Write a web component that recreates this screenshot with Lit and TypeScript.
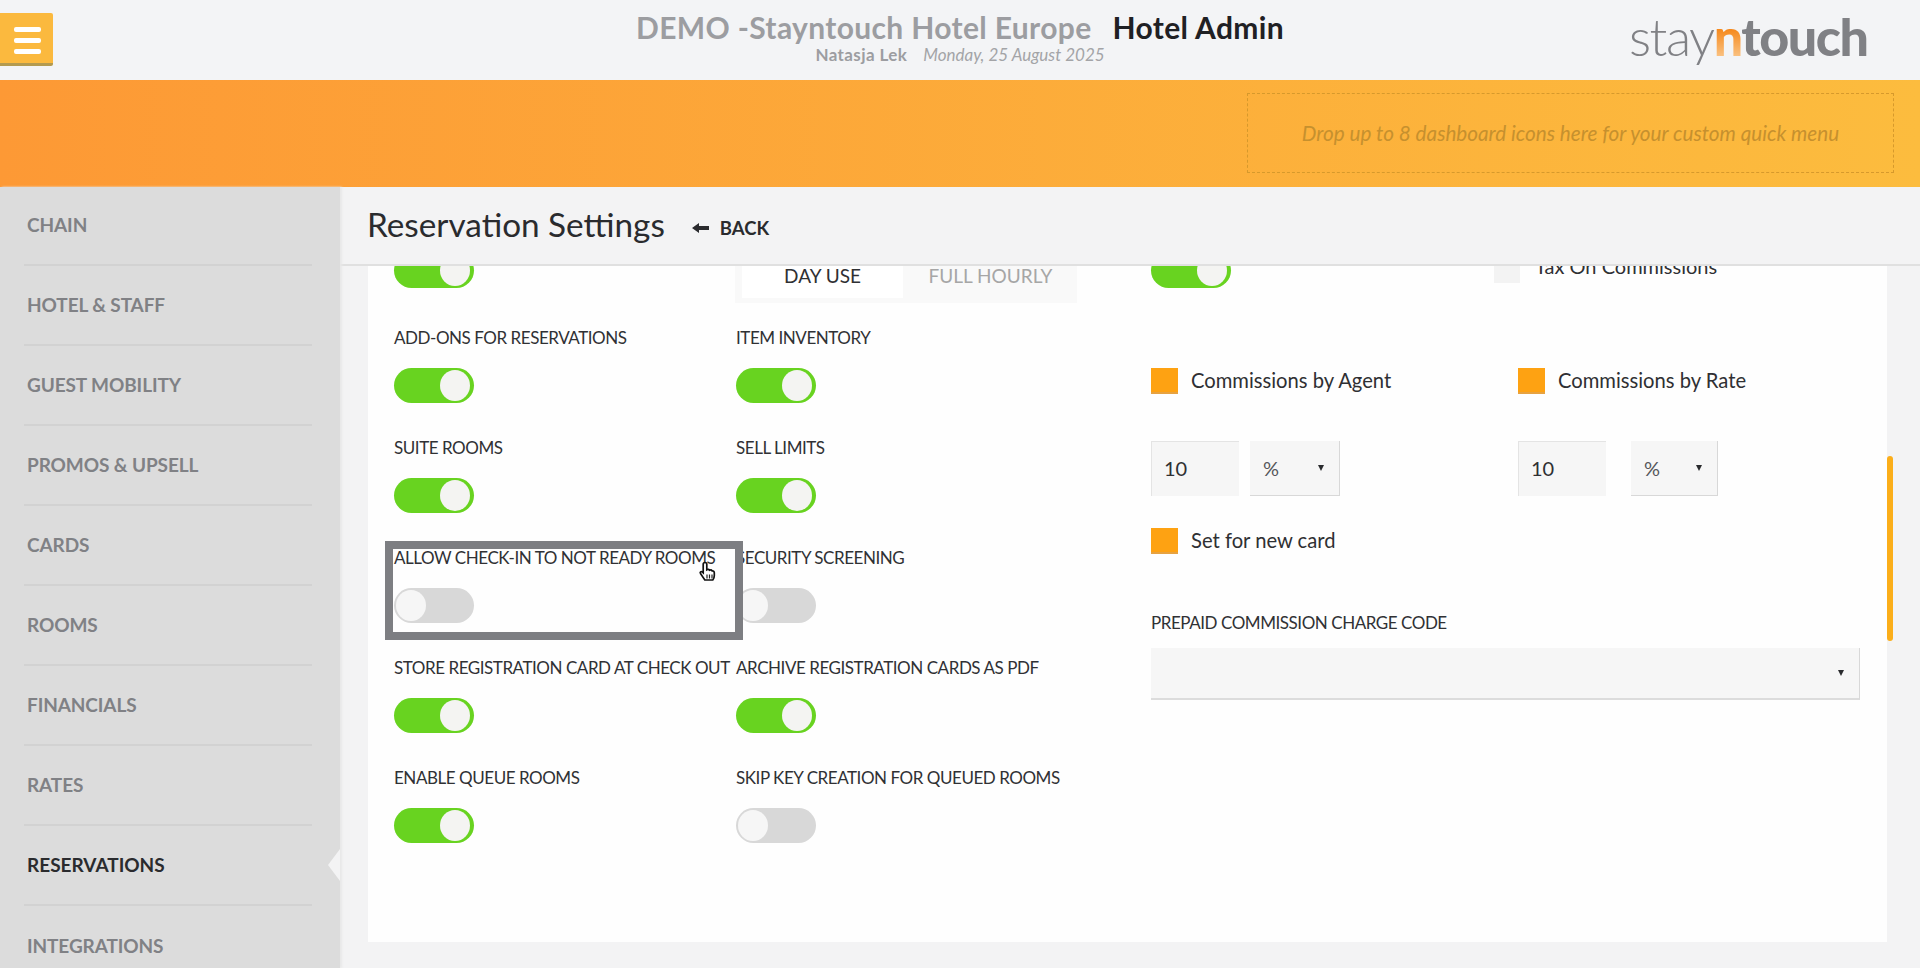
import { LitElement, html, css, svg } from "lit";
import { customElement } from "lit/decorators.js";

const NAV = ["CHAIN", "HOTEL & STAFF", "GUEST MOBILITY", "PROMOS & UPSELL", "CARDS", "ROOMS", "FINANCIALS", "RATES", "RESERVATIONS", "INTEGRATIONS"];

const ROWS: { label: string; on: boolean; label2: string; on2: boolean }[] = [
  { label: "ADD-ONS FOR RESERVATIONS", on: true, label2: "ITEM INVENTORY", on2: true },
  { label: "SUITE ROOMS", on: true, label2: "SELL LIMITS", on2: true },
  { label: "ALLOW CHECK-IN TO NOT READY ROOMS", on: false, label2: "SECURITY SCREENING", on2: false },
  { label: "STORE REGISTRATION CARD AT CHECK OUT", on: true, label2: "ARCHIVE REGISTRATION CARDS AS PDF", on2: true },
  { label: "ENABLE QUEUE ROOMS", on: true, label2: "SKIP KEY CREATION FOR QUEUED ROOMS", on2: false },
];

const hand = svg`<path d="M7 1.500c1.200 0 1.800.8 1.800 2v5.200c.9-.5 2.200-.4 2.800.5.9-.4 2-.2 2.500.7 1-.2 2.200.4 2.200 1.800v2.800c0 2.300-.7 3.500-1.500 4.500H6.800L2.500 12.500c-.9-1.100.6-2.500 1.700-1.600l1 .9V3.500c0-1.200.6-2 1.800-2z" fill="#fff" stroke="#111" stroke-width="1.700"/><path d="M9 13.500v4M11.500 13.500v4M14 13.500v4" stroke="#222" stroke-width="1.200"/>`;

@customElement("app-root")
export class AppRoot extends LitElement {
  static styles = css`
    :host { display: block; width: 100%; height: 968px; overflow: hidden; position: relative; background: #f3f3f4; font-family: "Lato", "Noto Sans", sans-serif; color: #2f3033; }
    .top { height: 80px; display: grid; grid-template-columns: 1fr auto 1fr; align-items: start; background: #f3f4f6; }
    .menu { width: 53px; height: 53px; margin-top: 13px; box-sizing: border-box; background: #fbb93e; border-bottom: 3px solid #b39a4f; border-radius: 0 2px 2px 0; display: flex; flex-direction: column; justify-content: center; align-items: center; gap: 6px; padding: 4px 0 0 1px; }
    .menu i { display: block; width: 27px; height: 5px; border-radius: 2px; background: #fff; }
    .heading { display: flex; flex-direction: column; align-items: center; }
    .h1 { display: flex; margin-top: 8px; height: 38px; align-items: center; font-size: 30px; font-weight: 700; white-space: nowrap; letter-spacing: 0.35px; }
    .h1 .hotel { color: #9c9da1; }
    .h1 .admin { color: #1f2024; margin-left: 21px; }
    .sub { display: flex; font-size: 17px; line-height: 20px; color: #a3a4a7; white-space: nowrap; margin-top: -1px; }
    .sub b { font-weight: 700; color: #9c9da1; margin-right: 16px; letter-spacing: 0.4px; }
    .sub em { font-style: italic; }
    .logo { justify-self: end; width: 291px; font-size: 52px; line-height: 72px; white-space: nowrap; letter-spacing: -1.500px; color: #808185; }
    .logo span { font-weight: 300; }
    .logo b { font-weight: 900; }
    .logo .n { background: linear-gradient(180deg, #f58a1f 40%, #fcd7a8 100%); -webkit-background-clip: text; background-clip: text; color: transparent; }
    .band { height: 107px; box-sizing: border-box; background: linear-gradient(90deg, #fd9935, #fcbc3e); padding: 13px 26px 0 1247px; }
    .drop { height: 80px; box-sizing: border-box; border: 1px dashed #d6992c; display: flex; align-items: center; justify-content: center; font-style: italic; font-size: 20.700px; color: #c6902e; white-space: nowrap; }
    .body { display: grid; grid-template-columns: 340px 1fr; height: 781px; }
    nav { background: #dcdcdc; overflow: hidden; box-shadow: 2px 0 2px #e8e8e8; position: relative; z-index: 1; padding: 0 28px 0 24px; }
    .item { height: 80px; box-sizing: border-box; padding: 0 3px 2px; display: flex; align-items: center; border-bottom: 2px solid #d2d2d2; font-size: 19px; font-weight: 700; letter-spacing: -0.1px; color: #808185; position: relative; }
    .item:first-child { margin-top: -1px; }
    .item.last { border-bottom: 0; }
    .item.sel { color: #2a2b2e; letter-spacing: 0; }
    .notch { position: absolute; right: -28px; top: 50%; margin-top: -16px; width: 12px; height: 32px; background: #f3f3f4; clip-path: polygon(100% 0, 0 50%, 100% 100%); }
    main { display: flex; flex-direction: column; min-width: 0; }
    .titlebar { height: 79px; box-sizing: border-box; border-bottom: 2px solid #e0e0e0; padding-left: 27px; display: flex; align-items: center; }
    .title { font-size: 33.300px; font-weight: 400; color: #2a2b2e; white-space: nowrap; margin-top: -3px; }
    .back { display: flex; align-items: center; margin-left: 27px; font-size: 18.500px; font-weight: 700; color: #2a2b2e; margin-top: 5px; }
    .back svg { margin-right: 11px; }
    .wrap { flex: 1; min-height: 0; padding: 0 33px 26px 28px; position: relative; }
    .card { height: 100%; background: #fefefe; overflow: hidden; display: grid; grid-template-columns: 342px 415px 1fr; padding-left: 26px; }
    .cell { height: 110px; }
    .left { display: grid; grid-column: 1 / 3; grid-template-columns: 342px 415px; grid-auto-rows: 110px; margin-top: -51px; }
    .label { height: 26px; line-height: 26px; font-size: 17px; letter-spacing: -0.45px; white-space: nowrap; color: #303134; }
    .tg { display: block; width: 80px; height: 35px; box-sizing: border-box; margin-top: 17px; border-radius: 18px; position: relative; }
    .first .tg { margin-top: 12px; }
    .tg.on { background: #68d320; }
    .tg.off { background: #d8d8d8; }
    .tg::after { content: ""; position: absolute; top: 2px; width: 30px; height: 31px; border-radius: 50%; background: #f4f4f2; }
    .tg.on::after { right: 4px; }
    .tg.off::after { left: 2px; background: #f6f6f6; }
    .tabs { margin-top: 28px; margin-left: -1px; width: 342px; height: 60px; box-sizing: border-box; background: #f9f9f9; padding: 10px 7px 5px; display: grid; grid-template-columns: 161px 1fr; text-align: center; font-size: 19px; line-height: 45px; }
    .tabs .a { background: #fff; color: #2f3033; }
    .tabs .b { color: #a6a6a6; padding-left: 8px; }
    .right { margin-top: -13px; min-width: 0; }
    .r1 { display: grid; grid-template-columns: 367px 1fr; height: 35px; }
    .r1 .tg { margin-top: 0; }
    .tax { display: flex; margin-left: -24px; height: 30px; }
    .tax i { width: 26px; height: 30px; background: #f3f3f3; flex: none; }
    .tax span { margin-left: 15px; font-size: 20px; line-height: 26px; white-space: nowrap; }
    .r2 { display: grid; grid-template-columns: 367px 1fr; margin-top: 80px; }
    .check { display: flex; align-items: flex-start; height: 26px; line-height: 24px; font-size: 20.200px; white-space: nowrap; color: #2f3033; }
    .check i { width: 27px; height: 26px; box-sizing: border-box; background: #fea212; border-bottom: 2px solid #e7a240; margin-right: 13px; flex: none; }
    .r3 { display: grid; grid-template-columns: 367px 1fr; margin-top: 47px; }
    .num { display: flex; }
    .in { box-sizing: border-box; height: 55px; background: #f6f6f6; border-top: 1px solid #e4e4e4; border-left: 1px solid #e4e4e4; padding-left: 12px; font-size: 20px; line-height: 53px; }
    .dd { box-sizing: border-box; height: 55px; background: #f6f6f6; border-bottom: 1px solid #d8d8d8; border-right: 1px solid #d8d8d8; display: flex; align-items: center; justify-content: space-between; padding: 0 15px 0 13px; font-size: 20px; color: #55565a; }
    .dd::after { content: ""; width: 0; height: 0; border-left: 3.500px solid transparent; border-right: 3.500px solid transparent; border-top: 6px solid #2a2b2e; }
    .num .in { width: 88px; }
    .num .dd { width: 90px; margin-left: 11px; }
    .num.b .dd { width: 87px; margin-left: 25px; }
    .r4 { margin-top: 32px; }
    .r5 { margin-top: 56px; }
    .dd.wide { height: 52px; margin-top: 12px; width: 709px; padding-right: 15px; border-bottom: 2px solid #dcdcdc; justify-content: flex-end; }
    .scroll { position: absolute; left: 1547px; top: 190px; width: 6px; height: 185px; border-radius: 3px; background: #fbae1a; }
    .focus { position: absolute; left: 385px; top: 541px; width: 358px; height: 99px; box-sizing: border-box; border: 8px solid #7d7e82; }
    .cursor { position: absolute; left: 698px; top: 561px; width: 20px; height: 22px; z-index: 3; }
  `;

  private tg(on: boolean) {
    return html`<span class="tg ${on ? "on" : "off"}"></span>`;
  }

  render() {
    return html`
      <div class="top">
        <div class="menu"><i></i><i></i><i></i></div>
        <div class="heading">
          <div class="h1"><span class="hotel">DEMO -Stayntouch Hotel Europe</span><span class="admin">Hotel Admin</span></div>
          <div class="sub"><b>Natasja Lek</b><em>Monday, 25 August 2025</em></div>
        </div>
        <div class="logo"><span>stay</span><b class="n">n</b><b>touch</b></div>
      </div>
      <div class="band"><div class="drop">Drop up to 8 dashboard icons here for your custom quick menu</div></div>
      <div class="body">
        <nav>
          ${NAV.map((n, i) => html`<div class="item ${n === "RESERVATIONS" ? "sel" : ""} ${i === NAV.length - 1 ? "last" : ""}">${n}${n === "RESERVATIONS" ? html`<span class="notch"></span>` : ""}</div>`)}
        </nav>
        <main>
          <div class="titlebar">
            <div class="title">Reservation Settings</div>
            <div class="back">
              <svg width="17" height="12" viewBox="0 0 17 12"><path d="M0 6l7-5v3h10v4H7v3z" fill="#2a2b2e"/></svg>
              BACK
            </div>
          </div>
          <div class="wrap">
            <div class="card">
              <div class="left">
                <div class="cell first"><div class="label"></div>${this.tg(true)}</div>
                <div class="cell"><div class="tabs"><div class="a">DAY USE</div><div class="b">FULL HOURLY</div></div></div>
                ${ROWS.map((r) => html`
                  <div class="cell"><div class="label">${r.label}</div>${this.tg(r.on)}</div>
                  <div class="cell"><div class="label">${r.label2}</div>${this.tg(r.on2)}</div>
                `)}
              </div>
              <div class="right">
                <div class="r1">${this.tg(true)}<div class="tax"><i></i><span>Tax On Commissions</span></div></div>
                <div class="r2">
                  <div class="check"><i></i>Commissions by Agent</div>
                  <div class="check"><i></i>Commissions by Rate</div>
                </div>
                <div class="r3">
                  <div class="num"><div class="in">10</div><div class="dd">%</div></div>
                  <div class="num b"><div class="in">10</div><div class="dd">%</div></div>
                </div>
                <div class="check r4"><i></i>Set for new card</div>
                <div class="label r5">PREPAID COMMISSION CHARGE CODE</div>
                <div class="dd wide"></div>
              </div>
            </div>
            <div class="scroll"></div>
          </div>
        </main>
      </div>
      <div class="focus"></div>
      <svg class="cursor" viewBox="0 0 20 22">${hand}</svg>
    `;
  }
}
